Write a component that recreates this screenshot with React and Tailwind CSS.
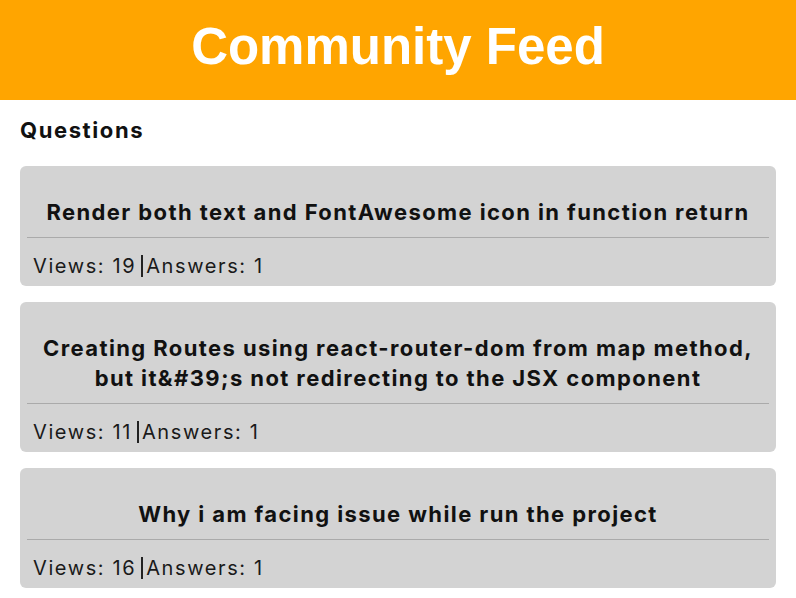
const questions = [
  { title: 'Render both text and FontAwesome icon in function return', views: 19, answers: 1 },
  {
    title: 'Creating Routes using react-router-dom from map method, but it&#39;s not redirecting to the JSX component',
    views: 11,
    answers: 1,
  },
  { title: 'Why i am facing issue while run the project', views: 16, answers: 1 },
]

const QuestionCard = ({ question }) => {
  return (
    <div className="rounded-md bg-[#d3d3d3] px-[7px] pt-[31px] pb-[6px]">
      <h3 className="border-b border-[#aaaaaa] pb-[10px] text-center text-[22px] leading-[30px] font-bold tracking-[1.4px] text-[#111]">
        {question.title}
      </h3>
      <div className="flex items-center pt-[14px] pl-[6px] text-[20px] leading-[28px] tracking-[1.6px] text-[#1a1a1a]">
        <span>Views: {question.views}</span>
        <span className="ml-[5px] mr-[3px] inline-block h-[22px] w-[2px] bg-[#222]" />
        <span>Answers: {question.answers}</span>
      </div>
    </div>
  )
}

export default function App() {
  return (
    <div className="min-h-screen bg-white font-['Inter',sans-serif]">
      {/* Header */}
      <header className="flex h-[100px] items-center justify-center bg-[#ffa500]">
        <h1 className="pb-[6px] font-['Liberation_Sans',Arial,sans-serif] text-[51px] font-bold text-white">
          Community Feed
        </h1>
      </header>

      {/* Questions list */}
      <main className="px-5">
        <h2 className="mt-[15px] mb-[21px] text-[22px] leading-[30px] font-bold tracking-[1.6px] text-[#111]">
          Questions
        </h2>
        <div className="flex flex-col gap-4">
          {questions.map((q, i) => (
            <QuestionCard key={i} question={q} />
          ))}
        </div>
      </main>
    </div>
  )
}
